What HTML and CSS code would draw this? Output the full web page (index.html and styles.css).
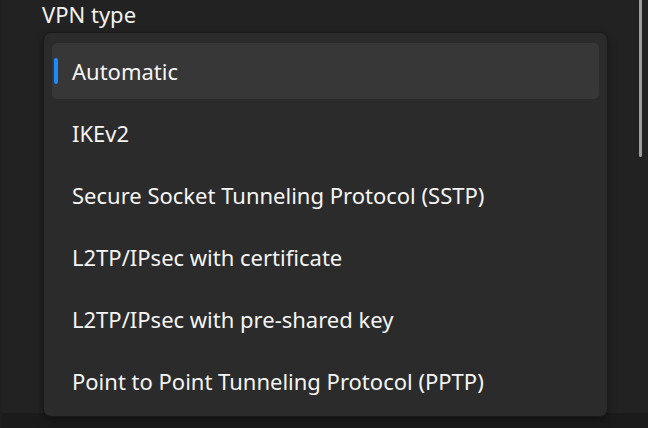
FILE: index.html
```html
<!DOCTYPE html>
<html lang="en">
<head>
<meta charset="utf-8">
<title>VPN type</title>
<link rel="stylesheet" href="styles.css">
</head>
<body>
<div class="window">
  <div class="edge"></div>
  <main class="content">
    <div class="label">VPN type</div>
    <div class="flyout" role="listbox">
      <div class="item selected" role="option" aria-selected="true"><span class="pill"></span>Automatic</div>
      <div class="item" role="option">IKEv2</div>
      <div class="item" role="option">Secure Socket Tunneling Protocol (SSTP)</div>
      <div class="item" role="option">L2TP/IPsec with certificate</div>
      <div class="item" role="option">L2TP/IPsec with pre-shared key</div>
      <div class="item" role="option">Point to Point Tunneling Protocol (PPTP)</div>
    </div>
    <div class="scrollbar"></div>
  </main>
  <div class="footer"></div>
</div>
</body>
</html>
```

FILE: styles.css
```css
* { box-sizing: border-box; }
html, body {
  margin: 0;
  padding: 0;
  width: 648px;
  height: 428px;
  overflow: hidden;
  background: #202020;
  font-family: "Noto Sans", "Open Sans", sans-serif;
  color: #ffffff;
}
.window {
  display: grid;
  grid-template-columns: 2px 1fr;
  grid-template-rows: 413px 15px;
  width: 648px;
  height: 428px;
}
.edge {
  grid-row: 1 / 3;
  background: #1d1f22;
}
.content {
  position: relative;
  background: #222222;
  padding: 0 0 0 40px;
}
.footer {
  background: #1b1b1b;
}
.label {
  font-size: 22px;
  line-height: 26px;
  height: 32px;
  padding-top: 1px;
  color: #f2f2f2;
}
.flyout {
  position: absolute;
  left: 41px;
  top: 32px;
  width: 565px;
  height: 385px;
  background: #2b2b2b;
  border: 1px solid #1a1a1a;
  border-radius: 8px;
  padding: 7px 8px 4px 8px;
  box-shadow: 0 4px 10px rgba(0,0,0,0.35);
  display: flex;
  flex-direction: column;
}
.item {
  position: relative;
  height: 56px;
  margin: 3px 0;
  flex: none;
  border-radius: 5px;
  padding-left: 20px;
  padding-bottom: 1px;
  display: flex;
  align-items: center;
  font-size: 22px;
  color: #f5f5f5;
}
.item.selected {
  background: #373737;
}
.pill {
  position: absolute;
  left: 2px;
  top: 15px;
  width: 4px;
  height: 26px;
  border-radius: 2px;
  background: #1a8cff;
}
.scrollbar {
  position: absolute;
  right: 6px;
  top: -4px;
  width: 3px;
  height: 161px;
  border-radius: 2px;
  background: #9c9c9c;
}
```
